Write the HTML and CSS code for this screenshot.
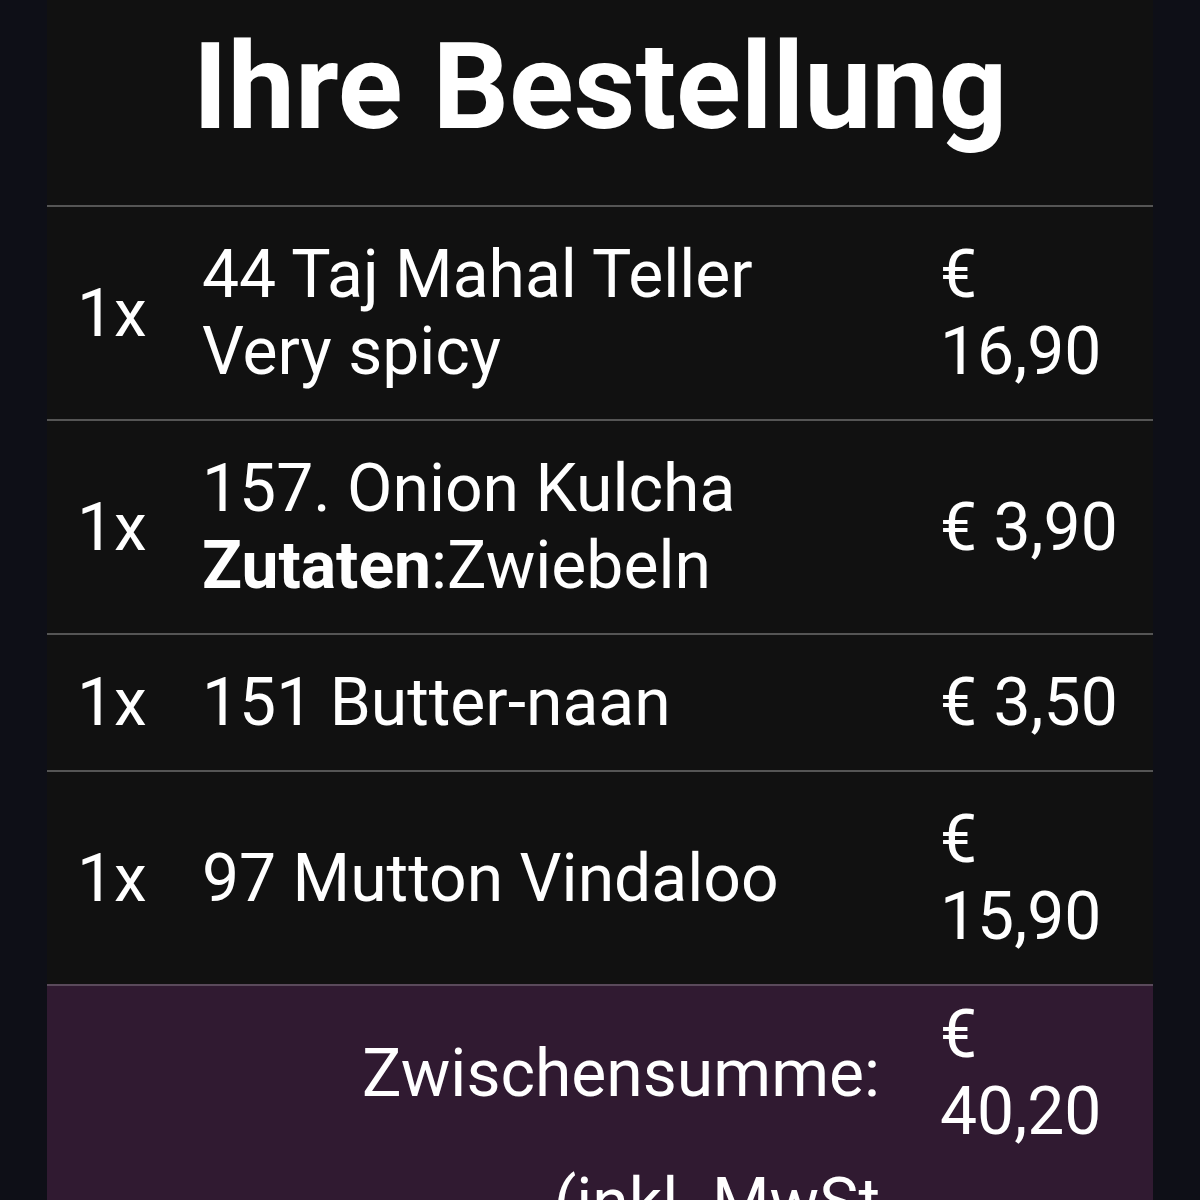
FILE: index.html
```html
<!DOCTYPE html>
<html lang="de">
  <head>
    <meta charset="UTF-8" />
    <meta name="viewport" content="width=device-width, initial-scale=1.0" />
    <title>Ihre Bestellung</title>
    <link rel="stylesheet" href="styles.css">
  </head>
  <body>
    <div class="order-panel">
      <h1 class="order-title">Ihre Bestellung</h1>

      <table class="order-table">
        <colgroup>
          <col class="col-qty" />
          <col class="col-name" />
          <col class="col-price" />
        </colgroup>
        <tbody>
          <tr>
            <td>1x</td>
            <td>44 Taj Mahal Teller<br />Very spicy</td>
            <td>€ 16,90</td>
          </tr>
          <tr>
            <td>1x</td>
            <td>157. Onion Kulcha<br /><b>Zutaten</b>:Zwiebeln</td>
            <td>€ 3,90</td>
          </tr>
          <tr>
            <td>1x</td>
            <td>151 Butter-naan</td>
            <td>€ 3,50</td>
          </tr>
          <tr>
            <td>1x</td>
            <td>97 Mutton Vindaloo</td>
            <td>€ 15,90</td>
          </tr>
        </tbody>
        <tfoot>
          <tr class="subtotal-row">
            <td colspan="2" class="label">Zwischensumme:</td>
            <td>€ 40,20</td>
          </tr>
          <tr class="tax-row">
            <td colspan="2" class="label">(inkl. MwSt<br />19 %)</td>
            <td></td>
          </tr>
        </tfoot>
      </table>
    </div>
  </body>
</html>
```

FILE: styles.css
```css
body {
  font-family: Roboto, "Noto Sans", sans-serif;
  margin: 0;
  padding: 0;
  background-color: #0e0f17;
  color: #fff;
}
.order-panel {
  width: 1106px;
  min-height: 100vh;
  margin: 0 auto;
  background-color: #111111;
}
.order-title {
  margin: 0;
  padding: 15px 0 45px;
  font-size: 120px;
  line-height: 145px;
  font-weight: 700;
  text-align: center;
}

/* Order table */
.order-table {
  width: 100%;
  table-layout: fixed;
  border-collapse: collapse;
  font-size: 66px;
}
.col-qty {
  width: 125px;
}
.col-name {
  width: 738px;
}
.col-price {
  width: 243px;
}
.order-table td {
  padding: 29px 30px;
  vertical-align: middle;
}
.order-table tbody tr {
  border-top: 2px solid #555;
}
.order-table b {
  font-weight: 700;
}

/* Totals */
.order-table tfoot {
  background-color: #301a31;
  border-top: 2px solid #5a4a5b;
}
.subtotal-row td {
  padding-top: 10px;
  padding-bottom: 10px;
}
.tax-row td {
  padding-top: 4px;
  vertical-align: top;
}
.label {
  text-align: right;
}
```
